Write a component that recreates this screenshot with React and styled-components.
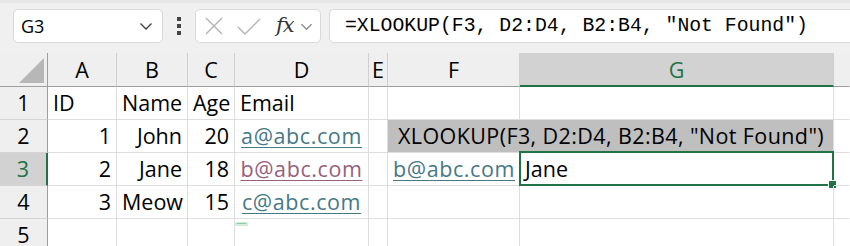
import React from "react";
import styled, { createGlobalStyle } from "styled-components";

const GREEN = "#217346";
const GRID = "#dedede";
const LINK = "#467886";
const VISITED = "#96607d";

const GlobalStyle = createGlobalStyle`
  html, body {
    margin: 0;
    padding: 0;
    background: #ffffff;
    overflow: hidden;
  }
  * {
    box-sizing: border-box;
  }
`;

const widths = [48, 69, 71, 47, 134, 19, 132, 314, 16];
const letters = ["A", "B", "C", "D", "E", "F", "G"];

const Page = styled.div`
  width: 850px;
  height: 246px;
  overflow: hidden;
  font-family: "Open Sans", "Noto Sans", sans-serif;
  color: #000;
`;

const Toolbar = styled.div`
  height: 53px;
  display: flex;
  align-items: flex-start;
  padding: 6px 0 0 13px;
  background: #f0f0f0;
  border-top: 3px solid #e8e8e8;
  overflow: hidden;
`;

const Box = styled.div`
  height: 34px;
  background: #fff;
  border: 1px solid #d9d9d9;
  border-radius: 5px;
  display: flex;
  align-items: center;
  flex-shrink: 0;
`;

const NameBox = styled(Box)`
  width: 150px;
  padding: 0 8px 0 7px;
  justify-content: space-between;
  font-size: 18px;
`;

const Grip = styled.div`
  width: 32px;
  height: 34px;
  display: flex;
  flex-direction: column;
  align-items: center;
  justify-content: center;
  gap: 3px;
  flex-shrink: 0;

  span {
    width: 4px;
    height: 4px;
    background: #444;
  }
`;

const FxBox = styled(Box)`
  width: 126px;
  padding: 0 4px 0 8px;
`;

const FxGlyph = styled.span`
  font-family: "DejaVu Serif", "Liberation Serif", serif;
  font-style: italic;
  font-size: 21px;
  color: #333;
  margin: -3px 5px 0 14px;
  letter-spacing: -1px;
`;

const FormulaBox = styled(Box)`
  margin-left: 8px;
  width: 600px;
  padding-left: 15px;
  font-family: "Liberation Mono", "DejaVu Sans Mono", monospace;
  font-size: 19.8px;
  white-space: pre;
`;

const Sheet = styled.div`
  display: grid;
  grid-template-columns: ${widths.map((w) => `${w}px`).join(" ")};
  grid-template-rows: 34px repeat(5, 33px);
  font-size: 21.5px;
`;

const Corner = styled.div`
  background: #efefef;
  border-right: 1px solid #9e9e9e;
  border-bottom: 1px solid #9e9e9e;
  position: relative;

  &::after {
    content: "";
    position: absolute;
    right: 3px;
    bottom: 3px;
    width: 0;
    height: 0;
    border-left: 25px solid transparent;
    border-bottom: 25px solid #b7b7b7;
  }
`;

const ColHead = styled.div`
  background: ${(p) => (p.$active ? "#d2d2d2" : "#efefef")};
  color: ${(p) => (p.$active ? GREEN : "#000")};
  border-right: 1px solid ${(p) => (p.$last ? "#efefef" : "#cfcfcf")};
  border-bottom: ${(p) => (p.$active ? `2px solid ${GREEN}` : "1px solid #9e9e9e")};
  text-align: center;
  line-height: 33px;
  overflow: hidden;
`;

const RowHead = styled.div`
  background: ${(p) => (p.$active ? "#d2d2d2" : "#efefef")};
  color: ${(p) => (p.$active ? GREEN : "#000")};
  border-right: ${(p) => (p.$active ? `2px solid ${GREEN}` : "1px solid #9e9e9e")};
  border-bottom: 1px solid #d4d4d4;
  text-align: center;
  line-height: 32px;
`;

const Cell = styled.div`
  position: relative;
  border-right: 1px solid ${(p) => (p.$last ? "#fff" : GRID)};
  border-bottom: 1px solid ${GRID};
  line-height: 32px;
  white-space: nowrap;
  text-align: ${(p) => p.$align || "left"};
  padding: 0 5px 0 ${(p) => (p.$indent ? 10 : 5)}px;
  background: ${(p) => p.$fill || "transparent"};
  grid-column: span ${(p) => p.$span || 1};
  letter-spacing: ${(p) => (p.$wide ? "0.4px" : "normal")};
  overflow: visible;
`;

const Link = styled.span`
  color: ${(p) => (p.$visited ? VISITED : LINK)};
  text-decoration: underline;
  text-decoration-thickness: 1px;
  text-underline-offset: 3px;
  letter-spacing: 0.6px;
`;

const Selection = styled.div`
  position: absolute;
  top: -2px;
  left: -1px;
  right: -1px;
  bottom: -1px;
  border: 2px solid ${GREEN};
  pointer-events: none;

  &::after {
    content: "";
    position: absolute;
    right: -4px;
    bottom: -4px;
    width: 7px;
    height: 7px;
    background: ${GREEN};
    outline: 1px solid #fff;
  }
`;

const PasteMark = styled.div`
  position: absolute;
  top: 3px;
  left: 0;
  width: 13px;
  height: 4px;
  background: #d3ecdc;
  &::after {
    content: "";
    position: absolute;
    left: 2px;
    right: 2px;
    top: 1px;
    height: 1px;
    background: #8ccaa3;
  }
`;

const Chevron = ({ size = 16, color = "#444" }) => (
  <svg width={size} height={size} viewBox="0 0 16 16">
    <path d="M2.5 5.5 L8 11 L13.5 5.5" fill="none" stroke={color} strokeWidth="1.4" />
  </svg>
);

const CancelIcon = () => (
  <svg width="20" height="20" viewBox="0 0 20 20">
    <path d="M2 2 L18 18 M18 2 L2 18" stroke="#b3b3b3" strokeWidth="1.4" fill="none" />
  </svg>
);

const CheckIcon = () => (
  <svg width="26" height="20" viewBox="0 0 26 20" style={{ marginLeft: 12 }}>
    <path d="M2 11 L9 18 L24 3" stroke="#b3b3b3" strokeWidth="1.4" fill="none" />
  </svg>
);

const rows = [
  [{ v: "ID" }, { v: "Name" }, { v: "Age" }, { v: "Email" }, {}, {}, {}],
  [
    { v: "1", a: "right" },
    { v: "John", a: "right" },
    { v: "20", a: "right" },
    { link: "a@abc.com", a: "center" },
    {},
    { v: 'XLOOKUP(F3, D2:D4, B2:B4, "Not Found")', span: 2, fill: "#bfbfbf", indent: true },
  ],
  [
    { v: "2", a: "right" },
    { v: "Jane", a: "right" },
    { v: "18", a: "right" },
    { link: "b@abc.com", visited: true, a: "center" },
    {},
    { link: "b@abc.com", a: "center" },
    { v: "Jane", selected: true },
  ],
  [
    { v: "3", a: "right" },
    { v: "Meow", a: "right" },
    { v: "15", a: "right" },
    { link: "c@abc.com", a: "center" },
    {},
    {},
    {},
  ],
  [{}, {}, {}, { mark: true }, {}, {}, {}],
];

export default function App() {
  return (
    <Page>
      <GlobalStyle />
      <Toolbar>
        <NameBox>
          <span>G3</span>
          <Chevron />
        </NameBox>
        <Grip>
          <span />
          <span />
          <span />
        </Grip>
        <FxBox>
          <CancelIcon />
          <CheckIcon />
          <FxGlyph>fx</FxGlyph>
          <Chevron size={15} color="#8a8a8a" />
        </FxBox>
        <FormulaBox>=XLOOKUP(F3, D2:D4, B2:B4, "Not Found")</FormulaBox>
      </Toolbar>
      <Sheet>
        <Corner />
        {letters.map((l) => (
          <ColHead key={l} $active={l === "G"}>
            {l}
          </ColHead>
        ))}
        <ColHead $last />
        {rows.map((row, r) => (
          <React.Fragment key={r}>
            <RowHead $active={r === 2}>{r + 1}</RowHead>
            {row.map((c, i) => (
              <Cell
                key={i}
                $align={c.a}
                $span={c.span}
                $fill={c.fill}
                $indent={c.indent}
                $wide={c.indent}
              >
                {c.link ? <Link $visited={c.visited}>{c.link}</Link> : c.v}
                {c.selected && <Selection />}
                {c.mark && <PasteMark />}
              </Cell>
            ))}
            <Cell $last />
          </React.Fragment>
        ))}
      </Sheet>
    </Page>
  );
}
